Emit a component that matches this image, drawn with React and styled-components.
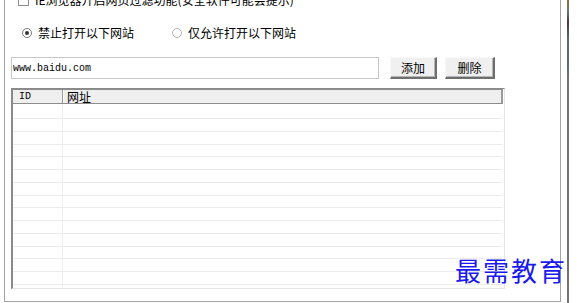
import React from 'react';
import styled, { createGlobalStyle } from 'styled-components';

const Global = createGlobalStyle`
  html, body { margin: 0; padding: 0; background: #fff; }
  body {
    font-family: "Noto Sans CJK SC", "Noto Sans", sans-serif;
    font-size: 12px;
    color: #000;
    overflow: hidden;
  }
`;

const Page = styled.div`
  position: relative;
  width: 577px;
  height: 303px;
  overflow: hidden;
  display: flex;
  align-items: flex-start;
  background: #fff;
`;

const GroupBox = styled.div`
  margin: -20px 0 0 4px;
  width: 557px;
  height: 322px;
  box-sizing: border-box;
  border: 1px solid #a3a3a3;
  display: flex;
  flex-direction: column;
  padding: 11px 0 0 6px;
`;

const WindowEdge = styled.div`
  margin-left: 6px;
  width: 2px;
  height: 303px;
  background: linear-gradient(
    to bottom,
    #8a6d3b 0px,
    #5d7a78 12px,
    #4b3a3c 22px,
    #55706c 40px,
    #5f6a6e 65px,
    #727272 80px,
    #727272 100%
  );
`;

const CheckRow = styled.div`
  display: flex;
  align-items: center;
  height: 16px;
  margin-left: 7px;
  gap: 6px;
  white-space: nowrap;
  line-height: 16px;
`;

const CheckBox = styled.span`
  display: inline-block;
  width: 11px;
  height: 11px;
  box-sizing: border-box;
  border: 1px solid #8e8e8e;
  background: #fff;
`;

const RadioRow = styled.div`
  display: flex;
  align-items: center;
  height: 16px;
  margin-top: 17px;
  padding-left: 11px;
  line-height: 16px;
`;

const RadioOption = styled.label`
  display: flex;
  align-items: center;
  gap: 6px;
  width: ${p => p.$w}px;
  white-space: nowrap;
`;

const Radio = styled.span`
  position: relative;
  display: inline-block;
  width: 10px;
  height: 10px;
  box-sizing: border-box;
  border-radius: 50%;
  border: 1px solid ${p => (p.$checked ? '#7a7a7a' : '#b5b5b5')};
  background: #fff;
  &::after {
    content: '';
    display: ${p => (p.$checked ? 'block' : 'none')};
    position: absolute;
    left: 2px;
    top: 2px;
    width: 4px;
    height: 4px;
    border-radius: 50%;
    background: #333;
  }
`;

const InputRow = styled.div`
  display: flex;
  align-items: stretch;
  height: 22px;
  margin-top: 16px;
`;

const UrlInput = styled.input`
  width: 368px;
  height: 22px;
  box-sizing: border-box;
  border: 1px solid #c6c6c6;
  padding: 0 1px;
  margin: 0;
  font-family: "Liberation Mono", "DejaVu Sans Mono", monospace;
  font-size: 10px;
  color: #000;
  outline: none;
  background: #fff;
`;

const Button = styled.button`
  width: ${p => p.$w}px;
  height: 22px;
  margin: 0 0 0 ${p => p.$ml}px;
  padding: 0;
  box-sizing: border-box;
  background: #f0f0f0;
  border-style: solid;
  border-width: 1px 2px 2px 1px;
  border-color: #f8f8f8 #6e6e6e #6e6e6e #f8f8f8;
  box-shadow: inset -1px -1px 0 #b4b4b4;
  font-family: "Noto Sans CJK SC", sans-serif;
  font-size: 12px;
  color: #000;
  line-height: 18px;
`;

const List = styled.div`
  margin-top: 9px;
  width: 494px;
  height: 201px;
  box-sizing: border-box;
  border-style: solid;
  border-width: 1px 1px 1px 2px;
  border-color: #8a8a8a #e4e4e4 #e4e4e4 #8a8a8a;
  display: flex;
  flex-direction: column;
  overflow: hidden;
  background: #fff;
`;

const Header = styled.div`
  display: flex;
  flex: none;
  height: 15px;
  box-sizing: border-box;
  background: #efefef;
  border-top: 1px solid #8c8c8c;
  border-bottom: 1px solid #8c8c8c;
  border-right: 2px solid #9a9a9a;
  margin-right: 1px;
`;

const HeadCell = styled.div`
  box-sizing: border-box;
  display: flex;
  align-items: center;
  height: 100%;
  width: ${p => (p.$w ? `${p.$w}px` : 'auto')};
  flex: ${p => (p.$w ? 'none' : '1')};
  padding-left: ${p => p.$pl}px;
  border-right: ${p => (p.$w ? '1px solid #9a9a9a' : 'none')};
  box-shadow: ${p => (p.$w ? '1px 0 0 #ffffff' : 'none')};
  font-family: ${p =>
    p.$mono
      ? '"Liberation Mono", "DejaVu Sans Mono", monospace'
      : '"Noto Sans CJK SC", sans-serif'};
  font-size: ${p => (p.$mono ? 10 : 12)}px;
  line-height: 1;
  white-space: nowrap;
`;

const Body = styled.div`
  flex: 1;
  display: flex;
  flex-direction: column;
  position: relative;
`;

const Row = styled.div`
  display: flex;
  flex: none;
  height: ${p => p.$h}px;
  box-sizing: border-box;
  border-bottom: 1px solid #ececec;
  margin-right: 2px;
`;

const Cell = styled.div`
  box-sizing: border-box;
  width: ${p => (p.$w ? `${p.$w}px` : 'auto')};
  flex: ${p => (p.$w ? 'none' : '1')};
  border-right: ${p => (p.$w ? '1px solid #efefef' : 'none')};
`;

const Filler = styled.div`
  flex: 1;
  display: flex;
`;

const Watermark = styled.div`
  position: absolute;
  left: 455px;
  top: 253px;
  font-family: "Noto Sans CJK SC", serif;
  font-size: 26px;
  font-weight: 400;
  letter-spacing: 2px;
  color: #1a1aee;
  line-height: 34px;
  white-space: nowrap;
`;

const rowHeights = [15, ...Array.from({ length: 13 }, () => 12.77)];

export default function App() {
  return (
    <>
      <Global />
      <Page>
        <GroupBox>
          <CheckRow>
            <CheckBox />
            <span>IE浏览器开启网页过滤功能(安全软件可能会提示)</span>
          </CheckRow>
          <RadioRow>
            <RadioOption $w={150}>
              <Radio $checked />
              <span>禁止打开以下网站</span>
            </RadioOption>
            <RadioOption $w={150}>
              <Radio />
              <span>仅允许打开以下网站</span>
            </RadioOption>
          </RadioRow>
          <InputRow>
            <UrlInput defaultValue="www.baidu.com" readOnly />
            <Button $w={47} $ml={11}>添加</Button>
            <Button $w={50} $ml={8}>删除</Button>
          </InputRow>
          <List>
            <Header>
              <HeadCell $w={50} $pl={6} $mono>ID</HeadCell>
              <HeadCell $pl={4}>网址</HeadCell>
            </Header>
            <Body>
              {rowHeights.map((h, i) => (
                <Row key={i} $h={h}>
                  <Cell $w={50} />
                  <Cell />
                </Row>
              ))}
              <Filler>
                <Cell $w={50} />
                <Cell />
              </Filler>
            </Body>
          </List>
        </GroupBox>
        <WindowEdge />
        <Watermark>最需教育</Watermark>
      </Page>
    </>
  );
}
